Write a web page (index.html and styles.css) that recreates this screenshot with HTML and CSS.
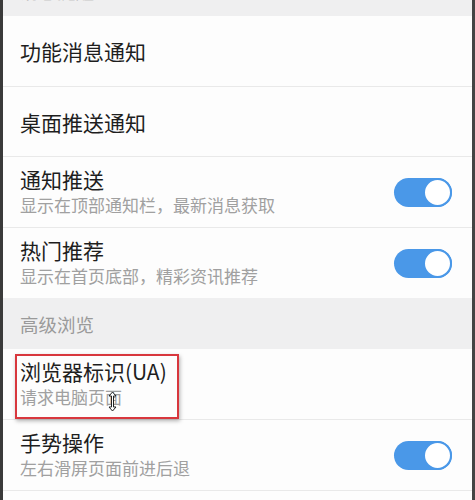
FILE: index.html
```html
<!DOCTYPE html>
<html lang="zh">
<head>
<meta charset="utf-8">
<link rel="stylesheet" href="styles.css">
</head>
<body>
<div class="frame">
  <div class="edge edge-left"></div>
  <main class="list">
    <div class="section section-top">消息提醒</div>
    <div class="row row-single row-a"><div class="title">功能消息通知</div></div>
    <div class="row row-single row-b"><div class="title">桌面推送通知</div></div>
    <div class="row row-a">
      <div class="text"><div class="title">通知推送</div><div class="sub">显示在顶部通知栏，最新消息获取</div></div>
      <div class="toggle"><span class="knob"></span></div>
    </div>
    <div class="row row-b row-last">
      <div class="text"><div class="title">热门推荐</div><div class="sub">显示在首页底部，精彩资讯推荐</div></div>
      <div class="toggle"><span class="knob"></span></div>
    </div>
    <div class="section">高级浏览</div>
    <div class="row row-a">
      <div class="text"><div class="title">浏览器标识(UA)</div><div class="sub">请求电脑页面</div></div>
      <div class="highlight"></div>
      <svg class="cursor" width="9" height="21" viewBox="0 0 9 21"><path d="M4.5 1 L8 5 L5.5 5 L5.5 16 L8 16 L4.5 20 L1 16 L3.5 16 L3.5 5 L1 5 Z" fill="#fff" stroke="#222" stroke-width="1"/></svg>
    </div>
    <div class="row row-a">
      <div class="text"><div class="title">手势操作</div><div class="sub">左右滑屏页面前进后退</div></div>
      <div class="toggle"><span class="knob"></span></div>
    </div>
    <div class="rest"></div>
  </main>
  <div class="edge edge-right"></div>
</div>
</body>
</html>
```
FILE: styles.css
```css
html, body {
  margin: 0;
  padding: 0;
  background: #fdfdfd;
  font-family: "Noto Sans CJK SC", "Noto Sans", sans-serif;
}
.frame {
  display: flex;
  width: 475px;
  height: 500px;
  overflow: hidden;
}
.edge-left { width: 3px; background: #3a3a3a; flex: none; }
.edge-right { width: 3px; background: #444; flex: none; }
.list {
  flex: 1;
  display: flex;
  flex-direction: column;
  background: #fdfdfd;
}
.section {
  height: 51px;
  flex: none;
  background: #efeff0;
  color: #9a9a9a;
  font-size: 18.5px;
  display: flex;
  align-items: center;
  padding-left: 17px;
  box-sizing: border-box;
}
.section-top { margin-top: -35px; }
.row {
  position: relative;
  flex: none;
  box-sizing: border-box;
  border-bottom: 1px solid #e9e9e9;
  display: flex;
  align-items: center;
  justify-content: space-between;
  padding: 0 20px 0 17px;
}
.row-a { height: 71px; }
.row-b { height: 70px; }
.row-last { border-bottom: none; }
.title {
  font-size: 21px;
  font-weight: 400;
  color: #1e1e1e;
  line-height: 26px;
}
.sub {
  font-size: 17px;
  color: #a0a0a0;
  line-height: 24px;
  margin-top: 1px;
}
.text { display: flex; flex-direction: column; margin-top: -1px; }
.toggle {
  width: 58px;
  height: 29px;
  border-radius: 15px;
  background: #4a98e8;
  position: relative;
  flex: none;
}
.knob {
  position: absolute;
  right: 0;
  top: 0;
  width: 29px;
  height: 29px;
  border-radius: 50%;
  background: #fff;
  border: 2px solid #4a98e8;
  box-sizing: border-box;
}
.highlight {
  position: absolute;
  left: 12px;
  top: 5px;
  width: 164px;
  height: 65px;
  border: 2px solid #d8373d;
  box-sizing: border-box;
  box-shadow: 1px 2px 4px rgba(0,0,0,0.3);
}
.cursor {
  position: absolute;
  left: 105px;
  top: 42px;
}
.rest { flex: 1; background: #fdfdfd; }
```
